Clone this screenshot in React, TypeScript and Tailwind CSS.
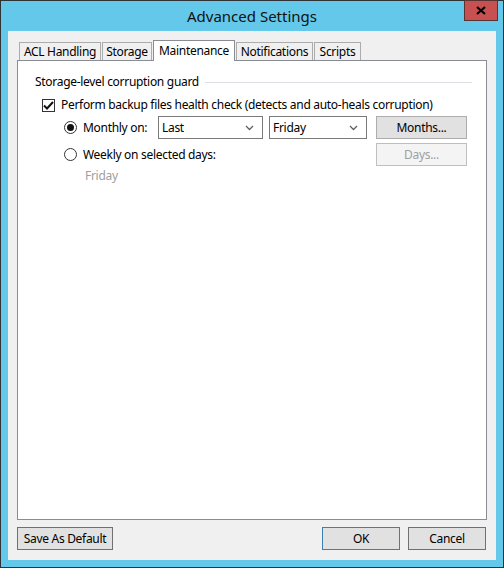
import React from "react";

const font = { fontFamily: '"Noto Sans", "Open Sans", sans-serif' };

function Tab({ label, width, active }: { label: string; width: number; active?: boolean }) {
  if (active) {
    return (
      <div
        className="relative z-10 flex h-[21px] items-start justify-center border border-b-0 border-[#898c95] bg-white pt-[1px] text-[12px] text-black"
        style={{ width }}
      >
        {label}
      </div>
    );
  }
  return (
    <div
      className="flex h-[19px] items-center justify-center border border-b-0 border-[#acacac] bg-[#f0f0f0] text-[12px] text-black"
      style={{ width }}
    >
      {label}
    </div>
  );
}

function Chevron() {
  return (
    <svg width="9" height="6" viewBox="0 0 9 6" className="shrink-0">
      <polyline points="1,1 4.5,4.5 8,1" fill="none" stroke="#606060" strokeWidth="1.3" />
    </svg>
  );
}

function Combo({ value, width }: { value: string; width: string }) {
  return (
    <div className={`flex h-[23px] items-center justify-between border border-[#7a7a7a] bg-white pl-[3px] pr-[8px] text-[12px] ${width}`}>
      <span>{value}</span>
      <Chevron />
    </div>
  );
}

export default function App() {
  return (
    <div
      className="flex h-[568px] w-[504px] flex-col border border-[#2f3336] bg-[#63c8ea] tracking-[-0.3px] text-black"
      style={font}
    >
      {/* title bar */}
      <div className="relative flex h-[30px] shrink-0 items-center justify-center">
        <span className="text-[15px] tracking-normal text-[#111]">Advanced Settings</span>
        <div className="absolute right-[5px] top-[-1px] flex h-[21px] w-[34px] items-center justify-center border border-[#5b3232] bg-[#c75050]">
          <svg width="10" height="9" viewBox="0 0 10 9">
            <path d="M1 1 L9 8 M9 1 L1 8" stroke="#000" strokeWidth="2.2" />
          </svg>
        </div>
      </div>

      {/* client area */}
      <div className="mx-[7px] flex h-[529px] flex-col bg-[#f0f0f0] px-[9px] pt-[9px]">
        <div className="flex items-end gap-[1px] pl-[2px]">
          <Tab label="ACL Handling" width={82} />
          <Tab label="Storage" width={50} />
          <Tab label="Maintenance" width={82} active />
          <Tab label="Notifications" width={77} />
          <Tab label="Scripts" width={47} />
        </div>

        <div className="-mt-[1px] flex h-[460px] flex-col border border-[#898c95] bg-white pl-[17px] pr-[14px] pt-[12px] text-[12px]">
          <div className="flex items-center gap-[6px]">
            <span>Storage-level corruption guard</span>
            <div className="h-px flex-1 bg-[#dcdfe3]" />
          </div>

          <div className="mt-[5px] flex items-center gap-[6px] pl-[7px]">
            <div className="flex h-[13px] w-[13px] items-center justify-center border border-[#333] bg-white">
              <svg width="11" height="9" viewBox="0 0 11 9">
                <path d="M1 4.5 L4 7.5 L10 1" fill="none" stroke="#111" strokeWidth="2" />
              </svg>
            </div>
            <span>Perform backup files health check (detects and auto-heals corruption)</span>
          </div>

          <div className="mt-[2px] flex items-center pl-[29px]">
            <div className="flex h-[13px] w-[13px] items-center justify-center rounded-full border border-[#333] bg-white">
              <div className="h-[7px] w-[7px] rounded-full bg-[#111]" />
            </div>
            <span className="ml-[6px] w-[75px]">Monthly on:</span>
            <Combo value="Last" width="w-[105px]" />
            <div className="w-[6px]" />
            <Combo value="Friday" width="w-[98px]" />
            <div className="w-[9px]" />
            <div className="flex h-[23px] w-[91px] items-center justify-center border border-[#adadad] bg-[#e1e1e1]">Months...</div>
          </div>

          <div className="mt-[4px] flex items-center pl-[29px]">
            <div className="h-[13px] w-[13px] rounded-full border border-[#333] bg-white" />
            <span className="ml-[6px]">Weekly on selected days:</span>
            <div className="flex-1" />
            <div className="mr-[5px] flex h-[23px] w-[91px] items-center justify-center border border-[#bfbfbf] bg-[#f4f4f4] text-[#a0a0a0]">Days...</div>
          </div>

          <div className="mt-[1px] pl-[50px] text-[#a0a0a0]">Friday</div>
        </div>

        <div className="mt-[7px] flex items-center text-[12px]">
          <div className="flex h-[23px] w-[96px] items-center justify-center border border-[#707070] bg-[#e1e1e1]">Save As Default</div>
          <div className="flex-1" />
          <div className="flex h-[23px] w-[78px] items-center justify-center border border-[#3c7fb1] bg-[#e1e1e1]">OK</div>
          <div className="ml-[8px] mr-[1px] flex h-[23px] w-[78px] items-center justify-center border border-[#707070] bg-[#e1e1e1]">Cancel</div>
        </div>
      </div>
    </div>
  );
}
